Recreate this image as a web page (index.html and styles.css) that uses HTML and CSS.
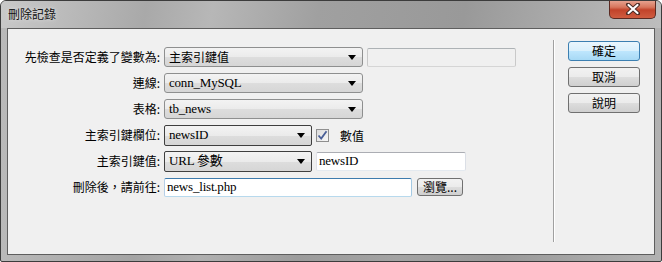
FILE: index.html
```html
<!DOCTYPE html>
<html lang="zh-Hant">
  <head>
    <meta charset="UTF-8" />
    <title>刪除記錄</title>
    <link rel="stylesheet" href="styles.css">
  </head>
  <body>
    <div class="window">
      <div class="titlebar">
        <span class="title">刪除記錄</span>
        <button class="close" type="button">
          <svg width="16" height="12" viewBox="0 0 16 12">
            <path d="M3 1.5 L13 10.5 M13 1.5 L3 10.5" stroke="#4a2a24" stroke-width="4" stroke-linecap="round" />
            <path d="M3.5 2 L12.5 10 M12.5 2 L3.5 10" stroke="#ffffff" stroke-width="2.2" stroke-linecap="round" />
          </svg>
        </button>
      </div>
      <div class="client">
        <form class="form">
          <label class="lbl">先檢查是否定義了變數為:</label>
          <div class="field">
            <div class="select wide cjk">主索引鍵值</div>
            <input class="text disabled" type="text" disabled />
          </div>

          <label class="lbl">連線:</label>
          <div class="field">
            <div class="select wide">conn_MySQL</div>
          </div>

          <label class="lbl">表格:</label>
          <div class="field">
            <div class="select wide">tb_news</div>
          </div>

          <label class="lbl">主索引鍵欄位:</label>
          <div class="field">
            <div class="select narrow dark">newsID</div>
            <span class="check">
              <svg width="11" height="11" viewBox="0 0 11 11">
                <path d="M1.5 5.5 L4.2 8.5 L9.5 1.2" fill="none" stroke="#4a5f97" stroke-width="1.8" />
              </svg>
            </span>
            <span class="check-text">數值</span>
          </div>

          <label class="lbl">主索引鍵值:</label>
          <div class="field">
            <div class="select narrow dark">URL 參數</div>
            <input class="text short" type="text" value="newsID" />
          </div>

          <label class="lbl">刪除後，請前往:</label>
          <div class="field">
            <input class="text long focus" type="text" value="news_list.php" />
            <button class="btn small" type="button">瀏覽...</button>
          </div>
        </form>
        <div class="sep"></div>
        <div class="actions">
          <button class="btn default" type="button">確定</button>
          <button class="btn" type="button">取消</button>
          <button class="btn" type="button">說明</button>
        </div>
      </div>
    </div>
  </body>
</html>
```

FILE: styles.css
```css
html,
body {
  margin: 0;
  padding: 0;
  background: #ffffff;
}

body {
  font-family: "Noto Sans CJK TC", sans-serif;
  font-size: 12px;
  color: #000;
}

.window {
  width: 660px;
  height: 260px;
  border: 1px solid #3c3c3c;
  border-radius: 6px 6px 2px 2px;
  background: linear-gradient(90deg, #b9b9b9 0%, #a4a4a4 20%, #b0b0b0 30%, #9c9c9c 45%, #a3a3a3 60%, #999999 75%, #b2b2b2 100%);
  display: flex;
  flex-direction: column;
  overflow: hidden;
}

.titlebar {
  height: 27px;
  display: flex;
  align-items: flex-start;
  justify-content: space-between;
  padding: 0 5px 0 7px;
  background: linear-gradient(100deg, #c9c9c9 0%, #a9a9a9 22%, #b7b7b7 32%, #a0a0a0 48%, #999999 70%, #bdbdbd 100%);
}

.title {
  margin-top: 5px;
  font-size: 12px;
  line-height: 16px;
  color: #111;
  text-shadow: 0 0 4px #e8e8e8;
}

.close {
  width: 47px;
  height: 19px;
  margin-top: -1px;
  padding: 0;
  border: 1px solid #5b2a22;
  border-top: none;
  border-radius: 0 0 5px 5px;
  background: linear-gradient(#e8a896 0%, #d7765d 40%, #c2432a 55%, #cf5c40 100%);
  display: flex;
  align-items: center;
  justify-content: center;
}

.client {
  flex: 1;
  margin: 0 6px 6px 6px;
  border: 1px solid #5e5e5e;
  background: #f0f0f0;
  display: flex;
}

.form {
  width: 545px;
  padding-top: 18px;
  display: grid;
  grid-template-columns: 153px 1fr;
  grid-auto-rows: 20px;
  row-gap: 6px;
  column-gap: 3px;
  align-content: start;
}

.lbl {
  text-align: right;
  line-height: 20px;
  white-space: nowrap;
  padding-right: 1px;
}

.field {
  display: flex;
  align-items: center;
  gap: 4px;
}

.select {
  box-sizing: border-box;
  height: 20px;
  padding: 0 22px 0 4px;
  border: 1px solid #8e8f8f;
  border-radius: 3px;
  background: linear-gradient(#f3f3f3 0%, #ebebeb 50%, #dddddd 51%, #d6d6d6 100%);
  font-family: "Liberation Serif", "Noto Sans CJK TC", serif;
  font-size: 13px;
  line-height: 18px;
  letter-spacing: -0.2px;
  position: relative;
  white-space: nowrap;
}

.select.cjk {
  font-family: "Noto Sans CJK TC", sans-serif;
  font-size: 12px;
  letter-spacing: 0;
}

.select::after {
  content: "";
  position: absolute;
  right: 6px;
  top: 7px;
  border-left: 4px solid transparent;
  border-right: 4px solid transparent;
  border-top: 5px solid #000;
}

.select.wide {
  width: 199px;
}

.select.narrow {
  width: 148px;
  height: 21px;
}

.select.dark {
  border-color: #3f3f3f;
  border-radius: 2px;
}

.text {
  box-sizing: border-box;
  height: 19px;
  margin: 0;
  padding: 0 2px;
  border: 1px solid #abadb3;
  border-color: #abadb3 #dbdfe6 #e3e9ef #e2e3ea;
  border-radius: 2px;
  background: #fff;
  font-family: "Liberation Serif", serif;
  font-size: 13px;
  letter-spacing: -0.2px;
  color: #000;
}

.text.disabled {
  width: 149px;
  background: #f0f0f0;
  border-color: #adb2b5 #c9c9c9 #d5d5d5 #c9c9c9;
}

.text.short {
  width: 150px;
}

.text.long {
  width: 248px;
}

.text.focus {
  border-color: #3d7bad #a4c9e3 #b7d9ed #b5cfe7;
}

.check {
  box-sizing: border-box;
  width: 13px;
  height: 13px;
  border: 1px solid #8f8f8f;
  background: linear-gradient(135deg, #dcdcdc, #f7f7f7);
  display: flex;
  align-items: center;
  justify-content: center;
}

.check-text {
  margin-left: 7px;
}

.btn {
  box-sizing: border-box;
  width: 72px;
  height: 20px;
  padding: 0;
  border: 1px solid #707070;
  border-radius: 3px;
  background: linear-gradient(#f2f2f2 0%, #ebebeb 50%, #dddddd 51%, #cfcfcf 100%);
  font-family: "Noto Sans CJK TC", sans-serif;
  font-size: 12px;
  line-height: 16px;
  color: #000;
}

.btn.default {
  border-color: #3c7fb1;
  background: linear-gradient(#eaf6fd 0%, #d9f0fc 50%, #bee6fd 51%, #a7d9f5 100%);
}

.btn.small {
  width: 46px;
  height: 18px;
  margin-left: 1px;
}

.sep {
  width: 1px;
  margin: 11px 0 12px 0;
  background: #a0a0a0;
  border-right: 1px solid #ffffff;
}

.actions {
  padding: 12px 0 0 13px;
  display: flex;
  flex-direction: column;
  gap: 6px;
}
```
